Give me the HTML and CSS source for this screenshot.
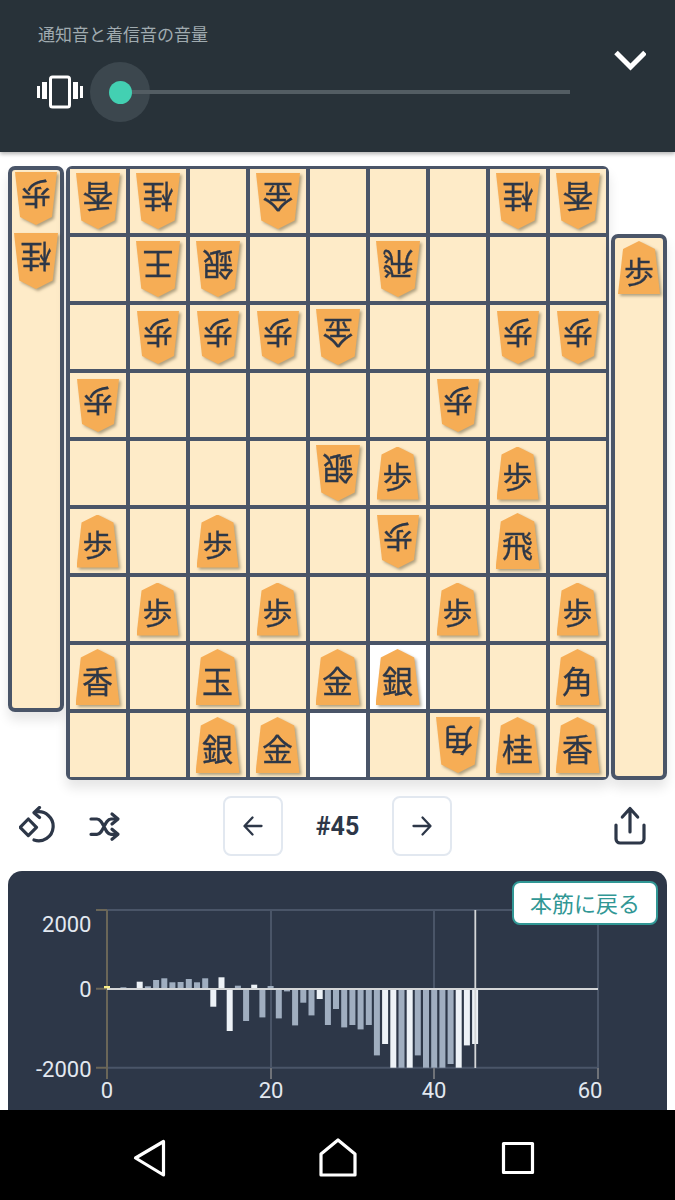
FILE: index.html
```html
<!DOCTYPE html>
<html lang="ja">
<head>
<meta charset="utf-8">
<title>将棋</title>
<link rel="stylesheet" href="styles.css">
</head>
<body>
<header class="volume">
  <div class="volume-main">
    <div class="volume-title">通知音と着信音の音量</div>
    <div class="volume-row">
      <svg class="vibrate" width="46" height="34" viewBox="0 0 46 34"><rect x="13.5" y="2" width="19" height="30" rx="2" class="vib-phone"/><rect x="5" y="7" width="5" height="17" class="vib-bar"/><rect x="0" y="11" width="3" height="12" class="vib-bar"/><rect x="36" y="7" width="5" height="17" class="vib-bar"/><rect x="43" y="11" width="3" height="12" class="vib-bar"/></svg>
      <div class="track"><span class="halo"></span><span class="line"></span><span class="dot"></span></div>
    </div>
  </div>
  <svg class="chevron" width="32" height="24" viewBox="0 0 32 24"><path d="M2 4.500L16.500 19L31 4.500"/></svg>
</header>

<main class="game">
  <div class="stand">
    <span class="piece small gote"><span class="face">歩</span></span>
    <span class="piece gote"><span class="face">桂</span></span>
  </div>
  <div class="board">
    <div class="cell"><span class="piece gote"><span class="face">香</span></span></div>
    <div class="cell"><span class="piece gote"><span class="face">桂</span></span></div>
    <div class="cell"></div>
    <div class="cell"><span class="piece gote"><span class="face">金</span></span></div>
    <div class="cell"></div>
    <div class="cell"></div>
    <div class="cell"></div>
    <div class="cell"><span class="piece gote"><span class="face">桂</span></span></div>
    <div class="cell"><span class="piece gote"><span class="face">香</span></span></div>

    <div class="cell"></div>
    <div class="cell"><span class="piece gote"><span class="face">王</span></span></div>
    <div class="cell"><span class="piece gote"><span class="face">銀</span></span></div>
    <div class="cell"></div>
    <div class="cell"></div>
    <div class="cell"><span class="piece gote"><span class="face">飛</span></span></div>
    <div class="cell"></div>
    <div class="cell"></div>
    <div class="cell"></div>

    <div class="cell"></div>
    <div class="cell"><span class="piece small gote"><span class="face">歩</span></span></div>
    <div class="cell"><span class="piece small gote"><span class="face">歩</span></span></div>
    <div class="cell"><span class="piece small gote"><span class="face">歩</span></span></div>
    <div class="cell"><span class="piece gote"><span class="face">金</span></span></div>
    <div class="cell"></div>
    <div class="cell"></div>
    <div class="cell"><span class="piece small gote"><span class="face">歩</span></span></div>
    <div class="cell"><span class="piece small gote"><span class="face">歩</span></span></div>

    <div class="cell"><span class="piece small gote"><span class="face">歩</span></span></div>
    <div class="cell"></div>
    <div class="cell"></div>
    <div class="cell"></div>
    <div class="cell"></div>
    <div class="cell"></div>
    <div class="cell"><span class="piece small gote"><span class="face">歩</span></span></div>
    <div class="cell"></div>
    <div class="cell"></div>

    <div class="cell"></div>
    <div class="cell"></div>
    <div class="cell"></div>
    <div class="cell"></div>
    <div class="cell"><span class="piece gote"><span class="face">銀</span></span></div>
    <div class="cell"><span class="piece small"><span class="face">歩</span></span></div>
    <div class="cell"></div>
    <div class="cell"><span class="piece small"><span class="face">歩</span></span></div>
    <div class="cell"></div>

    <div class="cell"><span class="piece small"><span class="face">歩</span></span></div>
    <div class="cell"></div>
    <div class="cell"><span class="piece small"><span class="face">歩</span></span></div>
    <div class="cell"></div>
    <div class="cell"></div>
    <div class="cell"><span class="piece small gote"><span class="face">歩</span></span></div>
    <div class="cell"></div>
    <div class="cell"><span class="piece"><span class="face">飛</span></span></div>
    <div class="cell"></div>

    <div class="cell"></div>
    <div class="cell"><span class="piece small"><span class="face">歩</span></span></div>
    <div class="cell"></div>
    <div class="cell"><span class="piece small"><span class="face">歩</span></span></div>
    <div class="cell"></div>
    <div class="cell"></div>
    <div class="cell"><span class="piece small"><span class="face">歩</span></span></div>
    <div class="cell"></div>
    <div class="cell"><span class="piece small"><span class="face">歩</span></span></div>

    <div class="cell"><span class="piece"><span class="face">香</span></span></div>
    <div class="cell"></div>
    <div class="cell"><span class="piece"><span class="face">玉</span></span></div>
    <div class="cell"></div>
    <div class="cell"><span class="piece"><span class="face">金</span></span></div>
    <div class="cell last"><span class="piece"><span class="face">銀</span></span></div>
    <div class="cell"></div>
    <div class="cell"></div>
    <div class="cell"><span class="piece"><span class="face">角</span></span></div>

    <div class="cell"></div>
    <div class="cell"></div>
    <div class="cell"><span class="piece"><span class="face">銀</span></span></div>
    <div class="cell"><span class="piece"><span class="face">金</span></span></div>
    <div class="cell last"></div>
    <div class="cell"></div>
    <div class="cell"><span class="piece gote"><span class="face">角</span></span></div>
    <div class="cell"><span class="piece"><span class="face">桂</span></span></div>
    <div class="cell"><span class="piece"><span class="face">香</span></span></div>
  </div>
  <div class="stand stand-right">
    <span class="piece small"><span class="face">歩</span></span>
  </div>
</main>

<section class="toolbar">
  <div class="tool-group">
    <svg class="icon" width="36" height="40" viewBox="0 0 36 40"><path d="M9.300 13L17.500 21.300L9.300 29.600L1.100 21.300Z"/><path d="M17 6A14.500 14.500 0 1 1 15 34"/><path d="M20.500 1.500L15 6.700L20.500 11.500"/></svg>
    <svg class="icon" width="34" height="40" viewBox="0 0 34 40"><path d="M3 13H9C15.500 13 16.500 28.300 23 28.300H29M3 28.300H9C15.500 28.300 16.500 13 23 13H29"/><path d="M24 8L30 13L24 18M24 23.300L30 28.300L24 33.300"/></svg>
  </div>
  <div class="pager">
    <button class="page-btn"><svg class="icon thin" width="24" height="24" viewBox="0 0 24 24"><path d="M20.500 12H4M11.500 3.500L3.500 12L11.500 20.500"/></svg></button>
    <span class="move">#45</span>
    <button class="page-btn"><svg class="icon thin" width="24" height="24" viewBox="0 0 24 24"><path d="M3.500 12H20M12.500 3.500L20.500 12L12.500 20.500"/></svg></button>
  </div>
  <div class="tool-end">
    <svg class="icon" width="36" height="40" viewBox="0 0 36 40"><path d="M4 19V33A4 4 0 0 0 8 37H28A4 4 0 0 0 32 33V19"/><path d="M18 26V3M10.300 11L18 2.500L25.700 11"/></svg>
  </div>
</section>

<section class="chart-card">
  <button class="mainline">本筋に戻る</button>
  <svg class="chart" width="659" height="240" viewBox="8 871 659 240">
    <g class="grid">
      <path d="M107 910H598M107 1067.700H598M271 910V1068M434 910V1068M598 925V1068"/>
    </g>
    <g class="ticks">
      <path d="M271 1068V1079M434 1068V1079M598 1068V1079"/>
    </g>
    <g class="axis">
      <path d="M107 910V1079M96 910H107M96 988.700H107M96 1067.700H107"/>
    </g>
    <g class="bar-grey">
      <rect x="120.400" y="987.300" width="6" height="1.400"/>
      <rect x="128.500" y="988" width="6" height="0.700"/>
      <rect x="144.900" y="986.300" width="6" height="2.400"/>
      <rect x="153.100" y="980" width="6" height="8.700"/>
      <rect x="161.300" y="978.300" width="6" height="10.400"/>
      <rect x="169.400" y="982.300" width="6" height="6.400"/>
      <rect x="177.600" y="982" width="6" height="6.700"/>
      <rect x="185.800" y="979" width="6" height="9.700"/>
      <rect x="194" y="982.300" width="6" height="6.400"/>
      <rect x="202.200" y="978.300" width="6" height="10.400"/>
      <rect x="234.900" y="985.700" width="6" height="3"/>
      <rect x="243.100" y="988.700" width="6" height="32.300"/>
      <rect x="259.400" y="988.700" width="6" height="28.700"/>
      <rect x="267.600" y="986" width="6" height="2.700"/>
      <rect x="275.800" y="988.700" width="6" height="29.700"/>
      <rect x="284" y="988.700" width="6" height="2.700"/>
      <rect x="292.100" y="988.700" width="6" height="36.700"/>
      <rect x="300.300" y="988.700" width="6" height="14"/>
      <rect x="308.500" y="988.700" width="6" height="26.700"/>
      <rect x="324.900" y="988.700" width="6" height="36.300"/>
      <rect x="333" y="988.700" width="6" height="20.300"/>
      <rect x="341.200" y="988.700" width="6" height="38.700"/>
      <rect x="349.400" y="988.700" width="6" height="36.300"/>
      <rect x="357.600" y="988.700" width="6" height="40.700"/>
      <rect x="365.800" y="988.700" width="6" height="36.300"/>
      <rect x="373.900" y="988.700" width="6" height="66.700"/>
      <rect x="398.500" y="988.700" width="6" height="79"/>
      <rect x="414.800" y="988.700" width="6" height="66.700"/>
      <rect x="423" y="988.700" width="6" height="79"/>
      <rect x="431.200" y="988.700" width="6" height="79"/>
      <rect x="439.400" y="988.700" width="6" height="79"/>
      <rect x="447.600" y="988.700" width="6" height="75.300"/>
    </g>
    <g class="bar-white">
      <rect x="136.700" y="981.700" width="6" height="7"/>
      <rect x="210.300" y="988.700" width="6" height="18"/>
      <rect x="218.500" y="977.300" width="6" height="11.300"/>
      <rect x="226.700" y="988.700" width="6" height="42.300"/>
      <rect x="251.200" y="984.700" width="6" height="4"/>
      <rect x="316.700" y="988.700" width="6" height="10.300"/>
      <rect x="382.100" y="988.700" width="6" height="55.300"/>
      <rect x="390.300" y="988.700" width="6" height="79"/>
      <rect x="406.700" y="988.700" width="6" height="79"/>
      <rect x="455.700" y="988.700" width="6" height="79"/>
      <rect x="463.900" y="988.700" width="6" height="56.700"/>
      <rect x="472.100" y="988.700" width="6" height="55.300"/>
    </g>
    <g class="marks">
      <path d="M107 989H598M475.300 910V1068"/>
    </g>
    <rect class="bar-first" x="104" y="986" width="6" height="2.300"/>
    <g class="labels">
      <text class="label-y" x="91.500" y="932">2000</text>
      <text class="label-y" x="91.500" y="997">0</text>
      <text class="label-y" x="91.500" y="1077">-2000</text>
      <text class="label-x" x="107" y="1098">0</text>
      <text class="label-x" x="271" y="1098">20</text>
      <text class="label-x" x="434" y="1098">40</text>
      <text class="label-x" x="590" y="1098">60</text>
    </g>
  </svg>
</section>

<nav class="android-nav">
  <svg class="nav-back" width="36" height="40" viewBox="0 0 36 40"><path d="M2.500 20L30.500 3.500V37Z"/></svg>
  <svg class="nav-home" width="40" height="40" viewBox="0 0 40 40"><path d="M20 2L37 16V37H3V16Z"/></svg>
  <svg class="nav-recent" width="36" height="40" viewBox="0 0 36 40"><rect x="3.500" y="5.500" width="29" height="29"/></svg>
</nav>
</body>
</html>
```

FILE: styles.css
```css
* { box-sizing: border-box; }

html, body {
  margin: 0;
  height: 100%;
  overflow: hidden;
  background: #fff;
}

body {
  font-family: "Noto Sans CJK JP", "Noto Sans", sans-serif;
  color: #2d3748;
}

.volume {
  height: 152px;
  background: #283239;
  padding: 0 29px 0 37px;
  display: flex;
  justify-content: space-between;
  box-shadow: 0 2px 4px rgba(0, 0, 0, .3);
}

.volume-main { width: 533px; }

.volume-title {
  margin: 22px 0 0 1px;
  font-size: 17px;
  line-height: 24px;
  color: #a0abb0;
}

.volume-row {
  margin-top: 29px;
  display: flex;
  align-items: center;
}

.vib-phone { fill: none; stroke: #fff; stroke-width: 3; }
.vib-bar { fill: #fff; }

.track {
  position: relative;
  flex: 1;
  height: 4px;
  margin-left: 37px;
}

.line {
  position: absolute;
  inset: 0;
  background: #535d63;
}

.halo {
  position: absolute;
  left: -30px;
  top: -28px;
  width: 60px;
  height: 60px;
  border-radius: 50%;
  background: #3c474e;
}

.dot {
  position: absolute;
  left: -11.500px;
  top: -9.500px;
  width: 23px;
  height: 23px;
  border-radius: 50%;
  background: #43d0b2;
}

.chevron {
  margin-top: 48px;
  fill: none;
  stroke: #fff;
  stroke-width: 5;
}

.game {
  display: flex;
  align-items: flex-start;
  gap: 2px;
  padding: 14px 0 0 8px;
}

.stand {
  width: 56px;
  height: 546px;
  background: #feebc8;
  border: 4px solid #4a5568;
  border-radius: 7px;
  padding-top: 2px;
  display: flex;
  flex-direction: column;
  align-items: center;
  gap: 8px;
  box-shadow: 0 8px 12px rgba(0, 0, 0, .1);
}

.stand-right {
  margin-top: 68px;
  padding-top: 3px;
}

.board {
  width: 543px;
  height: 614px;
  background: #4a5568;
  border: 3px solid #4a5568;
  border-radius: 6px;
  padding-left: 0.500px;
  display: grid;
  grid-template-columns: repeat(9, 56px);
  grid-template-rows: repeat(9, 1fr);
  gap: 4px;
  box-shadow: 0 8px 12px rgba(0, 0, 0, .1);
}

.cell {
  background: #feebc8;
  display: flex;
  align-items: center;
  justify-content: center;
}

.cell.last { background: #fff; }

.piece {
  display: block;
  flex: none;
  width: 44px;
  height: 56px;
  filter: drop-shadow(2px 2px 1.500px rgba(60, 50, 20, .4));
}

.piece.small {
  width: 42px;
  height: 53px;
}

.face {
  display: flex;
  align-items: center;
  justify-content: center;
  width: 100%;
  height: 100%;
  padding-top: 4px;
  background: #f6ad55;
  clip-path: polygon(50% 0, 88% 15%, 100% 100%, 0 100%, 12% 15%);
  font-size: 31px;
  line-height: 1;
  color: #2d3748;
  -webkit-text-stroke: 0.300px #2d3748;
}

.piece.small .face { font-size: 30px; }

.gote .face { transform: rotate(180deg); }

.toolbar {
  margin-top: 16px;
  height: 60px;
  padding: 0 19px;
  display: grid;
  grid-template-columns: 1fr auto 1fr;
  align-items: center;
}

.tool-group {
  display: flex;
  gap: 33px;
}

.tool-end {
  display: flex;
  justify-content: flex-end;
  padding-right: 8px;
}

.icon {
  display: block;
  fill: none;
  stroke: #2d3748;
  stroke-width: 3.200;
  stroke-linecap: round;
  stroke-linejoin: round;
}

.icon.thin { stroke-width: 2.300; }

.pager {
  display: flex;
  align-items: center;
}

.page-btn {
  width: 60px;
  height: 60px;
  padding: 0;
  background: #fff;
  border: 2px solid #e2e8f0;
  border-radius: 8px;
  display: flex;
  align-items: center;
  justify-content: center;
}

.move {
  width: 109px;
  text-align: center;
  font-family: Roboto, sans-serif;
  font-weight: 700;
  font-size: 25px;
  color: #2d3748;
}

.chart-card {
  position: relative;
  margin: 15px 8px 0;
  height: 270px;
  background: #2d3748;
  border-radius: 14px;
}

.chart { display: block; }

.mainline {
  position: absolute;
  right: 9px;
  top: 10px;
  width: 146px;
  height: 44px;
  padding: 0 0 3px;
  background: #fff;
  border: 2px solid #319795;
  border-radius: 8px;
  font-family: "Noto Sans CJK JP", sans-serif;
  font-size: 22px;
  color: #319795;
}

.grid path { fill: none; stroke: #4a5568; stroke-width: 2; }
.ticks path { fill: none; stroke: #6f7278; stroke-width: 2; }
.axis path { fill: none; stroke: #6a6658; stroke-width: 2; }
.bar-grey rect { fill: #a0aec0; }
.bar-white rect { fill: #edf2f7; }
.bar-first { fill: #faf089; }
.marks path { fill: none; stroke: #d4d6d8; stroke-width: 1.800; }

.labels text {
  font-family: Roboto, sans-serif;
  font-size: 22px;
  fill: #e2e8f0;
}

.label-y { text-anchor: end; }
.label-x { text-anchor: middle; }

.android-nav {
  position: fixed;
  left: 0;
  right: 0;
  bottom: 0;
  height: 90px;
  background: #000;
  padding: 28px 0 0 133px;
  display: flex;
  align-items: flex-start;
}

.android-nav svg {
  fill: none;
  stroke: #fff;
  stroke-width: 3.200;
  stroke-linejoin: round;
}

.nav-home { margin-left: 149px; }
.nav-recent { margin-left: 142px; }
```
